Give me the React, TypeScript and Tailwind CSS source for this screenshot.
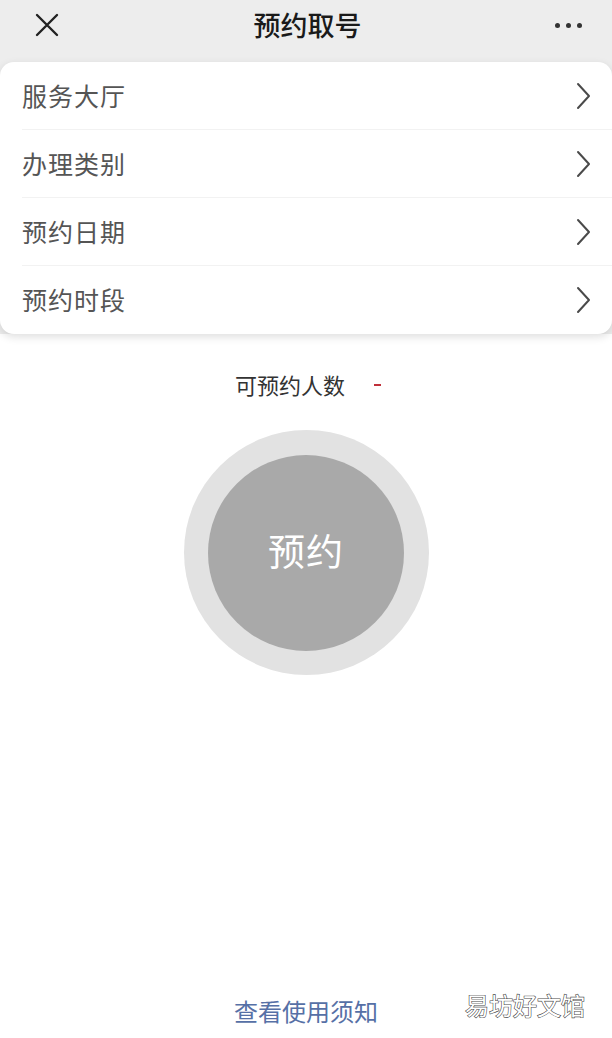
import React from 'react';

const font = "font-['Noto_Sans_CJK_SC','Noto_Sans',sans-serif]";

const rows = ['服务大厅', '办理类别', '预约日期', '预约时段'];

const Chevron: React.FC = () => (
  <svg width="16" height="28" viewBox="0 0 16 28" fill="none" className="shrink-0">
    <path d="M3 2 L14 14 L3 26" stroke="#4a4a4a" strokeWidth="2" strokeLinecap="round" strokeLinejoin="round" />
  </svg>
);

const App: React.FC = () => {
  return (
    <div className={`w-[612px] h-[1038px] bg-white flex flex-col overflow-hidden ${font}`}>
      <div className="bg-[#ededed] pb-[4px]">
        <div className="h-[60px] flex items-center justify-between px-[34px] pr-[30px]">
          <svg width="26" height="26" viewBox="0 0 26 26" className="mt-[-10px]">
            <path d="M3 3 L23 23 M23 3 L3 23" stroke="#222" strokeWidth="2.4" strokeLinecap="round" />
          </svg>
          <div className="text-[27px] font-medium text-[#1a1a1a] mt-[-10px]">预约取号</div>
          <div className="flex gap-[6px] mt-[-10px]">
            <span className="w-[5px] h-[5px] rounded-full bg-[#333]" />
            <span className="w-[5px] h-[5px] rounded-full bg-[#333]" />
            <span className="w-[5px] h-[5px] rounded-full bg-[#333]" />
          </div>
        </div>
      </div>

      <div className="bg-[#ededed]">
        <div className="bg-white rounded-[14px] shadow-[0_3px_8px_rgba(0,0,0,0.13)] mt-[-2px] relative">
          {rows.map((label, i) => (
            <div
              key={label}
              className={`h-[68px] ml-[22px] pr-[21px] flex items-center justify-between ${
                i < rows.length - 1 ? 'border-b border-[#f2f2f2]' : ''
              }`}
            >
              <span className="text-[25px] text-[#555] tracking-[1px]">{label}</span>
              <Chevron />
            </div>
          ))}
        </div>
      </div>

      <div className="bg-white flex flex-col items-center">
        <div className="mt-[34px] flex items-center ml-[4px]">
          <span className="text-[22px] text-[#333]">可预约人数</span>
          <span className="ml-[29px] w-[7px] h-[2px] bg-[#c0303a]" />
        </div>

        <div className="mt-[29px] w-[245px] h-[245px] rounded-full bg-[#e2e2e2] flex items-center justify-center">
          <button className="w-[196px] h-[196px] rounded-full bg-[#a9a9a9] flex items-center justify-center">
            <span className="text-[37px] text-white tracking-[1px] mt-[-4px]">预约</span>
          </button>
        </div>
      </div>

      <div className="flex-1" />

      <div className="h-[45px] flex items-start relative">
        <div className="w-full flex justify-center">
          <span className="text-[24px] text-[#5670a6]">查看使用须知</span>
        </div>
        <span className="absolute left-[465px] top-[-6px] text-[24px] text-white [-webkit-text-stroke:1.2px_#4a4a4a] [paint-order:stroke_fill]">
          易坊好文馆
        </span>
      </div>
    </div>
  );
};

export default App;
